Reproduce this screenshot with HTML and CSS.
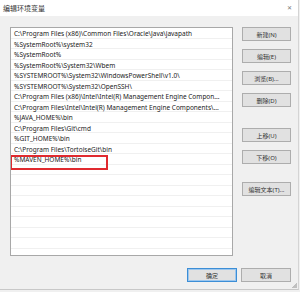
FILE: index.html
```html
<!DOCTYPE html>
<html>
<head>
	<title>编辑环境变量</title>
	<link rel="stylesheet" href="styles.css">
</head>
<body>
	<div class="dialog">
		<div class="titlebar">
			<span class="title">编辑环境变量</span>
			<span class="close">&#x2715;</span>
		</div>
		<div class="content">
			<div class="list">
				<div class="row">C:\Program Files (x86)\Common Files\Oracle\Java\javapath</div>
				<div class="row">%SystemRoot%\system32</div>
				<div class="row">%SystemRoot%</div>
				<div class="row">%SystemRoot%\System32\Wbem</div>
				<div class="row">%SYSTEMROOT%\System32\WindowsPowerShell\v1.0\</div>
				<div class="row">%SYSTEMROOT%\System32\OpenSSH\</div>
				<div class="row">C:\Program Files (x86)\Intel\Intel(R) Management Engine Compon...</div>
				<div class="row">C:\Program Files\Intel\Intel(R) Management Engine Components\...</div>
				<div class="row">%JAVA_HOME%\bin</div>
				<div class="row">C:\Program Files\Git\cmd</div>
				<div class="row">%GIT_HOME%\bin</div>
				<div class="row">C:\Program Files\TortoiseGit\bin</div>
				<div class="row marked">%MAVEN_HOME%\bin<span class="mark"></span></div>
				<div class="row"></div>
				<div class="row"></div>
				<div class="row"></div>
				<div class="row"></div>
				<div class="row"></div>
				<div class="row"></div>
				<div class="row"></div>
				<div class="row"></div>
				<div class="row"></div>
			</div>
			<div class="side">
				<div class="group">
					<button class="btn">新建(N)</button>
					<button class="btn">编辑(E)</button>
					<button class="btn">浏览(B)...</button>
					<button class="btn">删除(D)</button>
				</div>
				<div class="group move">
					<button class="btn">上移(U)</button>
					<button class="btn">下移(O)</button>
				</div>
				<div class="group text">
					<button class="btn">编辑文本(T)...</button>
				</div>
			</div>
		</div>
		<div class="footer">
			<button class="btn default">确定</button>
			<button class="btn">取消</button>
		</div>
		<div class="grip"></div>
	</div>
</body>
</html>
```

FILE: styles.css
```css
body {
	margin: 0;
	background-color: #f0f0f0;
	font-family: "Noto Sans", "Noto Sans CJK SC", sans-serif;
	color: #222;
}
.dialog {
	position: relative;
	width: 298px;
	height: 289px;
	background-color: #f0f0f0;
	border-right: 1px solid #d4d4d4;
	border-bottom: 1px solid #c8c8c8;
}
.titlebar {
	height: 16px;
	background-color: #fff;
	display: flex;
	align-items: center;
	justify-content: space-between;
	padding: 0 6px 0 3px;
}
.title {
	font-size: 7px;
	color: #333;
}
.close {
	font-size: 6px;
	color: #777;
}
.content {
	display: flex;
	padding: 11px 0 0 10px;
}
.list {
	width: 221px;
	height: 227px;
	background-color: #fff;
	border: 1px solid #a8a8a8;
	overflow: hidden;
}
.row {
	position: relative;
	box-sizing: border-box;
	height: 10.5px;
	line-height: 11px;
	padding-left: 3px;
	font-size: 6.5px;
	white-space: nowrap;
	border-bottom: 1px solid #f0f0f0;
}
.mark {
	position: absolute;
	left: -1px;
	top: 1px;
	width: 94px;
	height: 11px;
	border: 2px solid #e02a2f;
}
.side {
	margin-left: 9px;
	display: flex;
	flex-direction: column;
}
.group {
	display: flex;
	flex-direction: column;
	gap: 8px;
}
.move {
	margin-top: 21px;
}
.text {
	margin-top: 18px;
}
.btn {
	width: 49px;
	height: 14px;
	padding: 0;
	background-color: #e1e1e1;
	border: 1px solid #adadad;
	font-family: "Noto Sans", "Noto Sans CJK SC", sans-serif;
	font-size: 6px;
	color: #333;
}
.footer {
	display: flex;
	justify-content: flex-end;
	gap: 4px;
	padding: 12px 7px 0 0;
}
.footer .btn {
	width: 50px;
}
.default {
	border: 1px solid #3c8ed6;
	box-shadow: inset 0 0 0 1px #9dc7ee;
}
.grip {
	position: absolute;
	right: 1px;
	bottom: 1px;
	width: 5px;
	height: 5px;
	background: linear-gradient(135deg, transparent 50%, #c0c0c0 50%);
}
```
